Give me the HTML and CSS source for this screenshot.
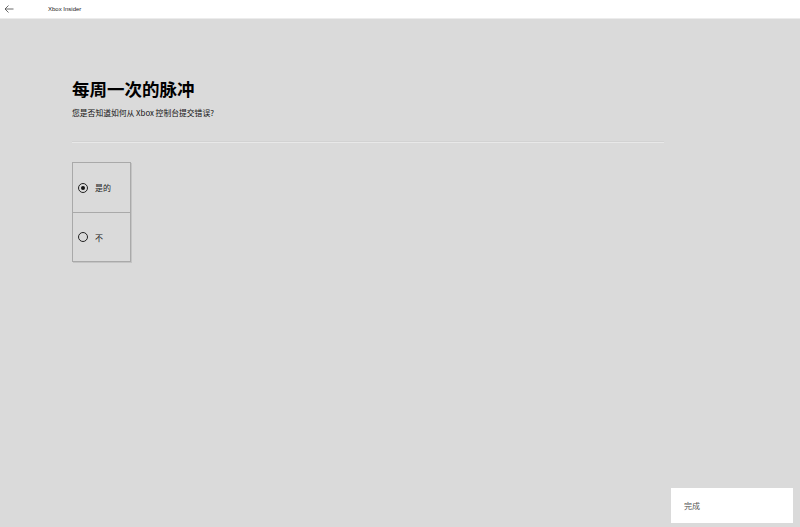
FILE: index.html
```html
<!DOCTYPE html>
<html lang="zh-CN">
<head>
<meta charset="utf-8">
<link rel="stylesheet" href="styles.css">
</head>
<body>
<header class="titlebar">
  <span class="back">
    <svg width="10" height="8" viewBox="0 0 10 8"><path d="M4.5 0.5 L1 4 L4.5 7.5 M1 4 H9.5" fill="none" stroke="#444" stroke-width="0.8"/></svg>
  </span>
  <span class="app-name">Xbox Insider</span>
</header>
<main class="content">
  <h1 class="title">每周一次的脉冲</h1>
  <p class="subtitle">您是否知道如何从 Xbox 控制台提交错误?</p>
  <hr class="divider">
  <div class="options">
    <div class="option">
      <span class="radio checked"></span>
      <span class="label">是的</span>
    </div>
    <div class="option">
      <span class="radio"></span>
      <span class="label">不</span>
    </div>
  </div>
</main>
<div class="done">完成</div>
</body>
</html>
```

FILE: styles.css
```css
html, body {
  margin: 0;
  padding: 0;
}
body {
  width: 800px;
  height: 527px;
  background: #dadada;
  font-family: "Noto Sans CJK SC", "Noto Sans", sans-serif;
  position: relative;
  overflow: hidden;
}
.titlebar {
  height: 19px;
  background: #ffffff;
  border-bottom: 1px solid #ececec;
  display: flex;
  align-items: center;
  box-sizing: border-box;
}
.back {
  width: 10px;
  height: 8px;
  margin-left: 4px;
  display: flex;
}
.app-name {
  margin-left: 34px;
  font-family: "Liberation Sans", sans-serif;
  font-size: 6px;
  color: #222;
}
.content {
  padding: 0 0 0 72px;
  width: 592px;
}
.title {
  margin: 59px 0 0 0;
  font-size: 17.5px;
  line-height: 22px;
  font-weight: 700;
  color: #000;
}
.subtitle {
  margin: 8px 0 0 0;
  font-size: 7.8px;
  line-height: 10px;
  color: #111;
}
.divider {
  margin: 23px 0 0 0;
  border: 0;
  height: 1px;
  background: #e8e8e8;
  border-top: 1px solid #d2d2d2;
}
.options {
  margin-top: 19px;
  width: 57px;
  border: 1px solid #a9a9a9;
  box-shadow: 1px 1px 0 #c4c4c4;
  display: flex;
  flex-direction: column;
}
.option {
  height: 49px;
  display: flex;
  align-items: center;
  padding-left: 5px;
  box-sizing: border-box;
}
.option + .option {
  border-top: 1px solid #a9a9a9;
}
.radio {
  width: 10px;
  height: 10px;
  border: 1px solid #222;
  border-radius: 50%;
  box-sizing: border-box;
  display: flex;
  align-items: center;
  justify-content: center;
}
.radio.checked::after {
  content: "";
  width: 4px;
  height: 4px;
  border-radius: 50%;
  background: #111;
}
.label {
  margin-left: 7px;
  font-size: 8px;
  color: #222;
}
.done {
  position: absolute;
  left: 671px;
  top: 488px;
  width: 122px;
  height: 35px;
  background: #ffffff;
  box-sizing: border-box;
  padding-left: 13px;
  display: flex;
  align-items: center;
  font-size: 8px;
  color: #555;
}
```
